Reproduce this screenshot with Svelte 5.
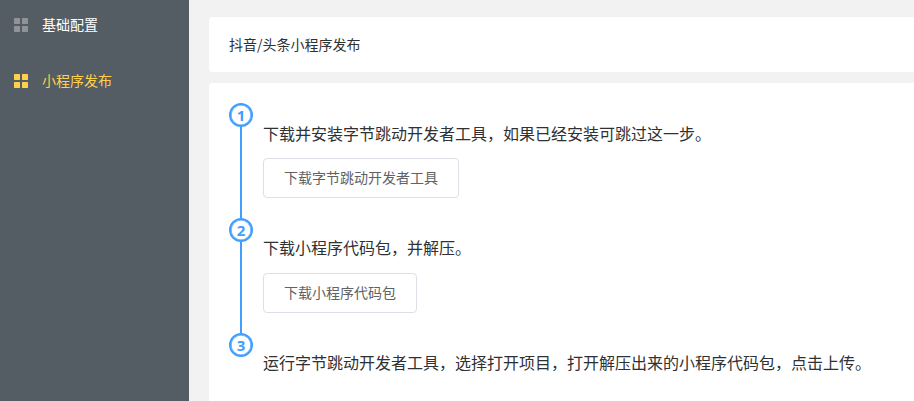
<script lang="ts">
	const menu = [
		{ label: '基础配置', active: false },
		{ label: '小程序发布', active: true }
	];

	const steps = [
		{ text: '下载并安装字节跳动开发者工具，如果已经安装可跳过这一步。', button: '下载字节跳动开发者工具' },
		{ text: '下载小程序代码包，并解压。', button: '下载小程序代码包' },
		{ text: '运行字节跳动开发者工具，选择打开项目，打开解压出来的小程序代码包，点击上传。', button: '' }
	];
</script>

<div class="layout">
	<aside class="sidebar">
		{#each menu as item}
			<div class="menu-item" class:active={item.active}>
				<svg class="menu-icon" viewBox="0 0 14 14" width="14" height="14">
					<rect x="0" y="0" width="6" height="6" rx="0.6" />
					<rect x="8" y="0" width="6" height="6" rx="0.6" />
					<rect x="0" y="8" width="6" height="6" rx="0.6" />
					<rect x="8" y="8" width="6" height="6" rx="0.6" />
				</svg>
				<span class="menu-label">{item.label}</span>
			</div>
		{/each}
	</aside>

	<main class="main">
		<div class="card header"><span class="title">抖音/头条小程序发布</span></div>
		<div class="card body">
			{#each steps as step, i}
				<div class="step">
					<div class="rail">
						<div class="circle">{i + 1}</div>
						{#if i < steps.length - 1}
							<div class="line"></div>
						{/if}
					</div>
					<div class="content">
						<div class="text">{step.text}</div>
						{#if step.button}
							<button class="btn"><span class="btn-label">{step.button}</span></button>
						{/if}
					</div>
				</div>
			{/each}
		</div>
	</main>
</div>

<style>
	:global(body) {
		margin: 0;
		overflow: hidden;
	}

	.layout {
		display: flex;
		height: 401px;
		width: 914px;
		overflow: hidden;
		background: #f2f2f2;
		font-family: "Noto Sans CJK SC", "Liberation Sans", sans-serif;
	}

	.sidebar {
		flex: none;
		width: 189px;
		background: #545c64;
		display: flex;
		flex-direction: column;
		gap: 6px;
	}

	.menu-item {
		display: flex;
		align-items: center;
		height: 50px;
		padding-left: 14px;
		gap: 14px;
		font-size: 14px;
		color: #fff;
	}

	.menu-label {
		padding-bottom: 3px;
	}

	.menu-icon {
		flex: none;
		fill: #909399;
	}

	.menu-item.active {
		color: #ffd04b;
	}

	.menu-item.active .menu-icon {
		fill: #ffd04b;
	}

	.main {
		flex: 1;
		min-width: 0;
		padding: 17px 0 0 20px;
		display: flex;
		flex-direction: column;
		gap: 11px;
	}

	.card {
		background: #fff;
		border-radius: 4px 0 0 4px;
	}

	.header {
		height: 55px;
		display: flex;
		align-items: center;
		padding-left: 20px;
		font-size: 14px;
		color: #303133;
		flex: none;
	}

	.title {
		padding-bottom: 2px;
	}

	.body {
		flex: 1;
		padding: 20px 0 0 20px;
	}

	.step {
		display: flex;
		height: 115px;
	}

	.rail {
		flex: none;
		width: 24px;
		margin-right: 10px;
		display: flex;
		flex-direction: column;
		align-items: center;
	}

	.circle {
		flex: none;
		box-sizing: border-box;
		width: 24px;
		height: 24px;
		border: 2px solid #409eff;
		box-shadow: inset 0 0 0 0.6px #409eff;
		border-radius: 50%;
		color: #409eff;
		font-size: 15px;
		font-weight: 700;
		line-height: 20px;
		text-align: center;
		font-family: "Open Sans", "Liberation Sans", sans-serif;
	}

	.line {
		flex: 1;
		width: 2px;
		background: #409eff;
	}

	.content {
		padding-top: 19px;
	}

	.text {
		font-size: 16px;
		line-height: 22px;
		color: #303133;
		white-space: nowrap;
	}

	.step + .step .text {
		margin-top: -1px;
	}

	.step + .step .btn {
		margin-top: 15px;
	}

	.btn {
		display: block;
		margin-top: 14px;
		height: 40px;
		padding: 0 20px;
		background: #fff;
		border: 1px solid #dcdfe6;
		border-radius: 4px;
		color: #606266;
		font-size: 14px;
		line-height: 36px;
		font-family: inherit;
		white-space: nowrap;
	}

	.btn-label {
		display: block;
		padding-bottom: 2px;
	}
</style>
